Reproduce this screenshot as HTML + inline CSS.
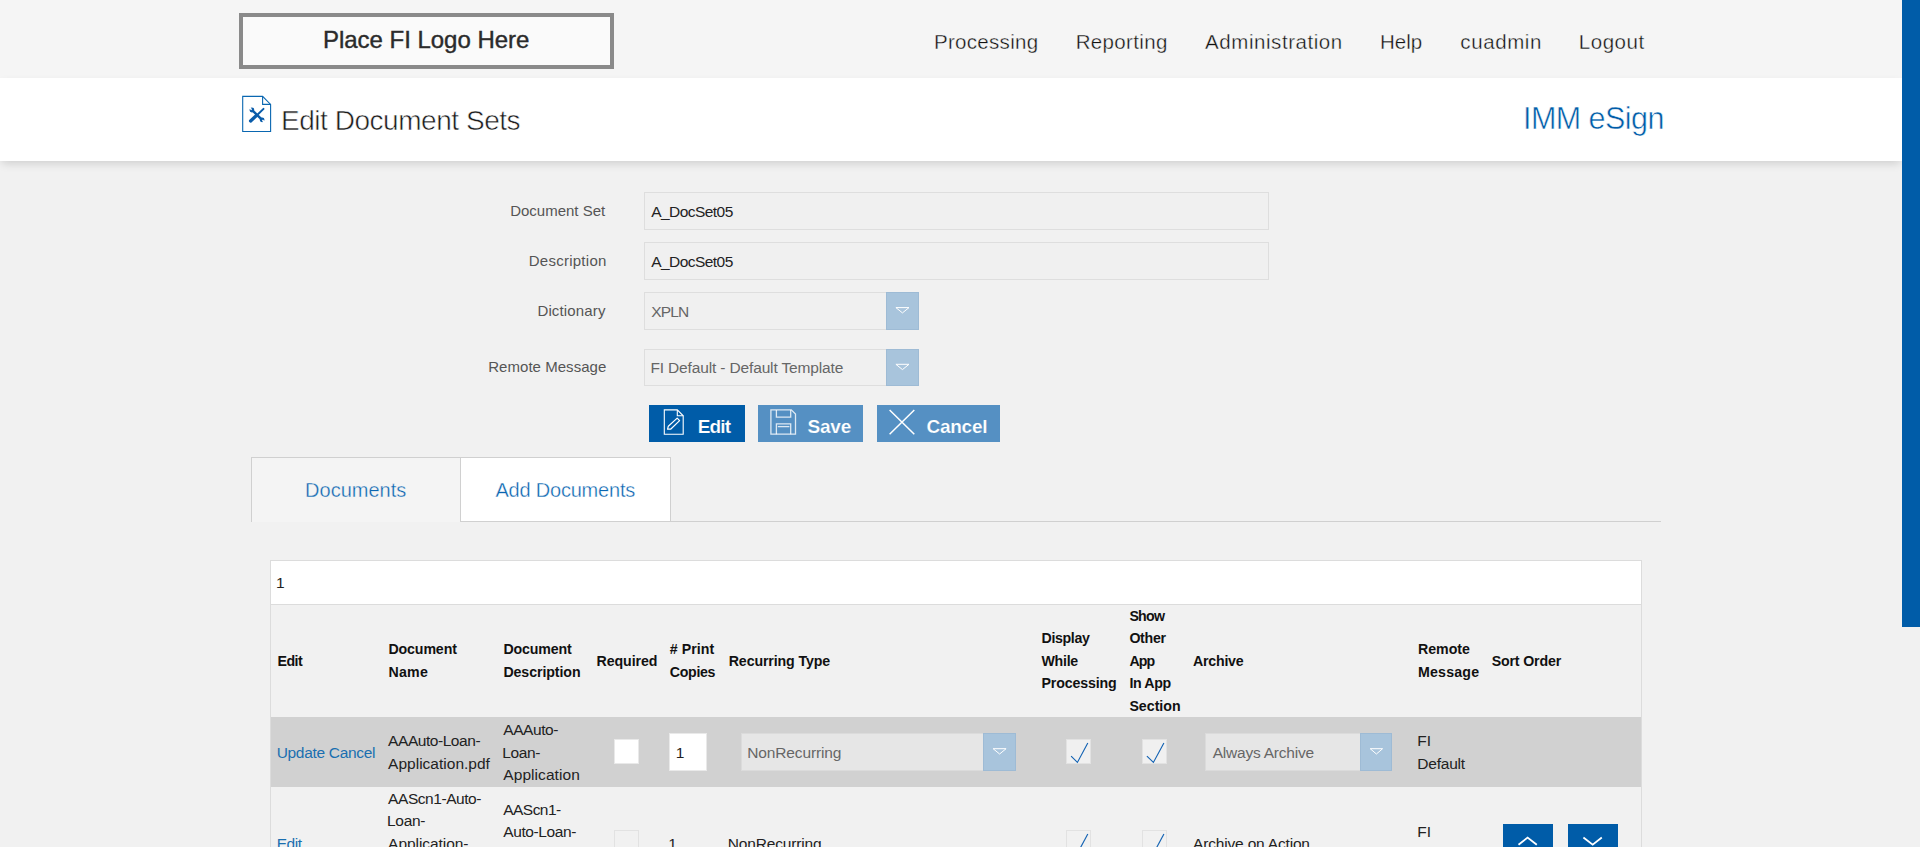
<!DOCTYPE html>
<html lang="en"><head><meta charset="utf-8"><title>Edit Document Sets</title>
<style>
html,body{margin:0;padding:0;}
body{width:1920px;height:847px;overflow:hidden;position:relative;background:#f1f1f1;font-family:"Liberation Sans",sans-serif;}
.abs,.t{position:absolute;}
.t{line-height:24px;white-space:nowrap;display:block;}
#hdr{left:0;top:0;width:1902px;height:78px;background:#f5f5f5;}
#logo{left:239px;top:13px;width:367px;height:48px;border:4px solid #8a8a8a;background:#fafafa;}
#titlebar{left:0;top:78px;width:1902px;height:83px;background:#fff;box-shadow:0 4px 9px -2px rgba(0,0,0,.16);}
#sbtrack{left:1902px;top:0;width:18px;height:847px;background:#f1f1f1;}
#sbthumb{left:1902px;top:0;width:18px;height:627px;background:#005ca8;}
.inp{border:1px solid #dedede;background:#f0f0f0;box-sizing:border-box;}
.ddb{background:#a8c4dc;box-sizing:border-box;border:1px solid #9ebbd5;}
.btn{height:37px;top:405px;}
.tab{box-sizing:border-box;}
.cb{box-sizing:border-box;width:25px;height:25px;}

</style></head>
<body>
<div class="abs" id="hdr"></div>
<div class="abs" id="logo"></div>
<div class="abs" id="titlebar"></div>
<div class="abs" id="sbtrack"></div>
<div class="abs" id="sbthumb"></div>
<!-- form -->
<div class="abs inp" style="left:644px;top:192px;width:625px;height:38px;"></div>
<div class="abs inp" style="left:644px;top:242px;width:625px;height:38px;"></div>
<div class="abs inp" style="left:644px;top:292px;width:275px;height:38px;"></div>
<div class="abs ddb" style="left:886px;top:292px;width:33px;height:38px;"></div>
<div class="abs inp" style="left:644px;top:349px;width:275px;height:37px;"></div>
<div class="abs ddb" style="left:886px;top:349px;width:33px;height:37px;"></div>
<!-- buttons -->
<div class="abs btn" style="left:649px;width:96px;background:#005ca8;"></div>
<div class="abs btn" style="left:758px;width:105px;background:#5590c3;"></div>
<div class="abs btn" style="left:877px;width:123px;background:#5590c3;"></div>
<!-- tabs -->
<div class="abs" style="left:251px;top:521px;width:1410px;height:1px;background:#d0d0d0;"></div>
<div class="abs tab" style="left:251px;top:457px;width:210px;height:65px;background:#f4f4f4;border:1px solid #d0d0d0;border-bottom:none;border-right:none;"></div>
<div class="abs tab" style="left:460px;top:457px;width:211px;height:65px;background:#fff;border:1px solid #d0d0d0;"></div>
<!-- grid -->
<div class="abs" style="left:270px;top:560px;width:1372px;height:300px;box-sizing:border-box;border:1px solid #dcdcdc;background:#f1f1f1;"></div>
<div class="abs" style="left:271px;top:561px;width:1370px;height:43px;background:#fff;border-bottom:1px solid #dcdcdc;"></div>
<div class="abs" style="left:271px;top:717px;width:1370px;height:70px;background:#d1d1d1;"></div>
<!-- row1 controls -->
<div class="abs cb" style="left:614px;top:739px;background:#fff;border:1px solid #e9e9e9;"></div>
<div class="abs" style="left:669px;top:733px;width:38px;height:38px;box-sizing:border-box;background:#fff;border:1px solid #e9e9e9;"></div>
<div class="abs" style="left:741px;top:733px;width:275px;height:38px;box-sizing:border-box;background:#e6e6e6;border:1px solid #dbdbdb;"></div>
<div class="abs ddb" style="left:983px;top:733px;width:33px;height:38px;"></div>
<div class="abs cb" style="left:1066px;top:739px;background:#f0f0f0;border:1px solid #e2e2e2;"></div>
<div class="abs cb" style="left:1142px;top:739px;background:#f0f0f0;border:1px solid #e2e2e2;"></div>
<div class="abs" style="left:1205px;top:733px;width:187px;height:38px;box-sizing:border-box;background:#e6e6e6;border:1px solid #dbdbdb;"></div>
<div class="abs ddb" style="left:1360px;top:733px;width:32px;height:38px;"></div>
<!-- row2 controls -->
<div class="abs cb" style="left:614px;top:830px;border:1px solid #e2e2e2;background:#f1f1f1;"></div>
<div class="abs cb" style="left:1066px;top:830px;border:1px solid #e2e2e2;background:#f1f1f1;"></div>
<div class="abs cb" style="left:1142px;top:830px;border:1px solid #e2e2e2;background:#f1f1f1;"></div>
<div class="abs" style="left:1503px;top:824px;width:50px;height:40px;background:#005ca8;"></div>
<div class="abs" style="left:1568px;top:824px;width:50px;height:40px;background:#005ca8;"></div>
<!-- icons -->
<svg class="abs" style="left:0;top:0;" width="1902" height="847" viewBox="0 0 1902 847" fill="none">
  <!-- title doc icon -->
  <path d="M242.7 96.4H262.6L270.6 104.4V131.5H242.7Z" stroke="#0a67b1" stroke-width="1.1" fill="#fff"/>
  <path d="M262.6 96.4V104.4H270.6" stroke="#0a67b1" stroke-width="1.1"/>
  <g stroke="#0a5caa" stroke-linecap="round">
  <path d="M252.6 110.6L261.4 119.2" stroke-width="2.4"/>
  <circle cx="251.9" cy="110" r="1.6" stroke-width="1.6" fill="#0a5caa"/>
  <circle cx="262.1" cy="119.8" r="1.6" stroke-width="1.6" fill="#0a5caa"/>
  <path d="M263.5 108.9L257.2 115" stroke-width="2"/>
  <path d="M256.2 115.8L250.6 121" stroke-width="3.3"/>
  </g>
  <path d="M251.6 109.7L249.3 107.4M262.4 120.1L264.7 122.4" stroke="#fff" stroke-width="1.5"/>
  <!-- dropdown arrows -->
  <g stroke="#fff" stroke-width="1" stroke-linejoin="round">
  <path d="M895.9 307.6H909L902.45 312.9Z"/>
  <path d="M895.9 364.3H909L902.45 369.6Z"/>
  <path d="M993.1 748.7H1006.1L999.6 754Z"/>
  <path d="M1370.2 748.7H1382.6L1376.4 754Z"/>
  </g>
  <!-- edit icon -->
  <path d="M664.3 409.9H677.3L683.2 415.8V434.3H664.3Z" stroke="#fff" stroke-width="1.1"/>
  <path d="M677.3 409.9V415.8H683.2" stroke="#fff" stroke-width="1.1"/>
  <path d="M667.6 429.2L668.3 426.2L677.2 418.1L679.6 420.6L670.6 429.2Z" stroke="#fff" stroke-width="1.2" stroke-linejoin="round"/>
  <!-- save icon -->
  <g stroke="rgba(255,255,255,.8)" stroke-width="1.3">
  <path d="M770.9 409.9H791.3L795.5 414.1V434.2H770.9Z"/>
  <path d="M776.4 409.9V417.2H790.7V409.9"/>
  <path d="M776.4 434.2V423.9H790.7V434.2"/>
  <path d="M777.8 426.6H789.4"/>
  </g>
  <!-- cancel icon -->
  <path d="M889.6 410L914.3 434.2M914.3 410L889.6 434.2" stroke="#fff" stroke-width="1.5"/>
  <!-- checks -->
  <g stroke="#1262b3" stroke-width="1.15">
  <path d="M1071.1 756.1L1077.4 762.4L1087.8 743"/>
  <path d="M1146.9 756.1L1153.4 762.4L1163.9 743"/>
  <path d="M1080.3 848L1087.8 834"/>
  <path d="M1156.4 848L1163.9 834"/>
  </g>
  <!-- chevrons -->
  <path d="M1518.5 844.8L1527.6 837.6L1536.8 844.8" stroke="#fff" stroke-width="1.8"/>
  <path d="M1583.4 837.5L1592.7 844.6L1601.8 837.5" stroke="#fff" stroke-width="1.8"/>
</svg>

<div id="text">
<span class="t" style="left:934.00px;top:30px;font-size:20.5px;font-weight:400;color:#111;letter-spacing:0.299px;-webkit-text-stroke:0.35px #f5f5f5;">Processing</span>
<span class="t" style="left:1075.70px;top:30px;font-size:20.5px;font-weight:400;color:#111;letter-spacing:0.352px;-webkit-text-stroke:0.35px #f5f5f5;">Reporting</span>
<span class="t" style="left:1205.10px;top:30px;font-size:20.5px;font-weight:400;color:#111;letter-spacing:0.555px;-webkit-text-stroke:0.35px #f5f5f5;">Administration</span>
<span class="t" style="left:1379.90px;top:30px;font-size:20.5px;font-weight:400;color:#111;letter-spacing:0.047px;-webkit-text-stroke:0.35px #f5f5f5;">Help</span>
<span class="t" style="left:1460.30px;top:30px;font-size:20.5px;font-weight:400;color:#111;letter-spacing:0.603px;-webkit-text-stroke:0.35px #f5f5f5;">cuadmin</span>
<span class="t" style="left:1578.80px;top:30px;font-size:20.5px;font-weight:400;color:#111;letter-spacing:0.519px;-webkit-text-stroke:0.35px #f5f5f5;">Logout</span>
<span class="t" style="left:323.00px;top:28px;font-size:24px;font-weight:400;color:#2b2b2b;letter-spacing:-0.025px;-webkit-text-stroke:0.4px #2b2b2b;">Place FI Logo Here</span>
<span class="t" style="left:281.00px;top:109px;font-size:28px;font-weight:400;color:#1c1c1c;letter-spacing:-0.462px;-webkit-text-stroke:0.55px #fff;">Edit Document Sets</span>
<span class="t" style="left:1523.00px;top:106px;font-size:30.5px;font-weight:400;color:#005ca8;letter-spacing:-0.551px;-webkit-text-stroke:0.55px #fff;">IMM eSign</span>
<span class="t" style="left:510.20px;top:199px;font-size:15px;font-weight:400;color:#555;letter-spacing:-0.007px;">Document Set</span>
<span class="t" style="left:528.70px;top:249px;font-size:15px;font-weight:400;color:#555;letter-spacing:0.261px;">Description</span>
<span class="t" style="left:537.40px;top:299px;font-size:15px;font-weight:400;color:#555;letter-spacing:0.157px;">Dictionary</span>
<span class="t" style="left:488.20px;top:355px;font-size:15px;font-weight:400;color:#555;letter-spacing:0.045px;">Remote Message</span>
<span class="t" style="left:651.20px;top:200px;font-size:15.5px;font-weight:400;color:#222;letter-spacing:-0.545px;">A_DocSet05</span>
<span class="t" style="left:651.20px;top:250px;font-size:15.5px;font-weight:400;color:#222;letter-spacing:-0.545px;">A_DocSet05</span>
<span class="t" style="left:651.20px;top:300px;font-size:15.5px;font-weight:400;color:#666;letter-spacing:-0.799px;">XPLN</span>
<span class="t" style="left:650.40px;top:356px;font-size:15.5px;font-weight:400;color:#666;letter-spacing:-0.145px;">FI Default - Default Template</span>
<span class="t" style="left:697.75px;top:415px;font-size:19px;font-weight:700;color:#fff;letter-spacing:-0.853px;-webkit-text-stroke:0.2px #005ca8;">Edit</span>
<span class="t" style="left:807.50px;top:415px;font-size:19px;font-weight:700;color:#fff;letter-spacing:-0.186px;-webkit-text-stroke:0.2px #5590c3;">Save</span>
<span class="t" style="left:926.50px;top:415px;font-size:19px;font-weight:700;color:#fff;letter-spacing:-0.266px;-webkit-text-stroke:0.2px #5590c3;">Cancel</span>
<span class="t" style="left:305.10px;top:478px;font-size:20px;font-weight:400;color:#0a65b0;letter-spacing:0.006px;-webkit-text-stroke:0.35px #f4f4f4;">Documents</span>
<span class="t" style="left:495.40px;top:478px;font-size:20px;font-weight:400;color:#0a65b0;letter-spacing:-0.200px;-webkit-text-stroke:0.35px #fff;">Add Documents</span>
<span class="t" style="left:276.00px;top:571px;font-size:15.5px;font-weight:400;color:#222;letter-spacing:0.000px;">1</span>
<span class="t" style="left:277.40px;top:649px;font-size:14.2px;font-weight:700;color:#111;letter-spacing:-0.457px;">Edit</span>
<span class="t" style="left:388.40px;top:637px;font-size:14.2px;font-weight:700;color:#111;letter-spacing:-0.120px;">Document</span>
<span class="t" style="left:388.40px;top:660px;font-size:14.2px;font-weight:700;color:#111;letter-spacing:0.250px;">Name</span>
<span class="t" style="left:503.40px;top:637px;font-size:14.2px;font-weight:700;color:#111;letter-spacing:-0.149px;">Document</span>
<span class="t" style="left:503.40px;top:660px;font-size:14.2px;font-weight:700;color:#111;letter-spacing:-0.088px;">Description</span>
<span class="t" style="left:596.50px;top:649px;font-size:14.2px;font-weight:700;color:#111;letter-spacing:-0.075px;">Required</span>
<span class="t" style="left:669.80px;top:637px;font-size:14.2px;font-weight:700;color:#111;letter-spacing:0.063px;"># Print</span>
<span class="t" style="left:669.80px;top:660px;font-size:14.2px;font-weight:700;color:#111;letter-spacing:-0.322px;">Copies</span>
<span class="t" style="left:728.75px;top:649px;font-size:14.2px;font-weight:700;color:#111;letter-spacing:-0.128px;">Recurring Type</span>
<span class="t" style="left:1041.50px;top:626px;font-size:14.2px;font-weight:700;color:#111;letter-spacing:-0.346px;">Display</span>
<span class="t" style="left:1041.50px;top:649px;font-size:14.2px;font-weight:700;color:#111;letter-spacing:-0.285px;">While</span>
<span class="t" style="left:1041.50px;top:671px;font-size:14.2px;font-weight:700;color:#111;letter-spacing:-0.147px;">Processing</span>
<span class="t" style="left:1129.40px;top:604px;font-size:14.2px;font-weight:700;color:#111;letter-spacing:-0.732px;">Show</span>
<span class="t" style="left:1129.40px;top:626px;font-size:14.2px;font-weight:700;color:#111;letter-spacing:-0.304px;">Other</span>
<span class="t" style="left:1129.40px;top:649px;font-size:14.2px;font-weight:700;color:#111;letter-spacing:-0.956px;">App</span>
<span class="t" style="left:1129.40px;top:671px;font-size:14.2px;font-weight:700;color:#111;letter-spacing:-0.372px;">In App</span>
<span class="t" style="left:1129.40px;top:694px;font-size:14.2px;font-weight:700;color:#111;letter-spacing:0.004px;">Section</span>
<span class="t" style="left:1193.00px;top:649px;font-size:14.2px;font-weight:700;color:#111;letter-spacing:-0.234px;">Archive</span>
<span class="t" style="left:1418.00px;top:637px;font-size:14.2px;font-weight:700;color:#111;letter-spacing:-0.028px;">Remote</span>
<span class="t" style="left:1418.00px;top:660px;font-size:14.2px;font-weight:700;color:#111;letter-spacing:0.192px;">Message</span>
<span class="t" style="left:1491.70px;top:649px;font-size:14.2px;font-weight:700;color:#111;letter-spacing:-0.159px;">Sort Order</span>
<span class="t" style="left:276.70px;top:741px;font-size:15.5px;font-weight:400;color:#1a6fb0;letter-spacing:-0.316px;">Update Cancel</span>
<span class="t" style="left:388.10px;top:729px;font-size:15.5px;font-weight:400;color:#222;letter-spacing:-0.446px;">AAAuto-Loan-</span>
<span class="t" style="left:388.10px;top:752px;font-size:15.5px;font-weight:400;color:#222;letter-spacing:0.009px;">Application.pdf</span>
<span class="t" style="left:503.30px;top:718px;font-size:15.5px;font-weight:400;color:#222;letter-spacing:-0.427px;">AAAuto-</span>
<span class="t" style="left:502.30px;top:741px;font-size:15.5px;font-weight:400;color:#222;letter-spacing:-0.395px;">Loan-</span>
<span class="t" style="left:503.30px;top:763px;font-size:15.5px;font-weight:400;color:#222;letter-spacing:0.069px;">Application</span>
<span class="t" style="left:675.80px;top:741px;font-size:15.5px;font-weight:400;color:#222;letter-spacing:0.000px;">1</span>
<span class="t" style="left:747.30px;top:741px;font-size:15.5px;font-weight:400;color:#666;letter-spacing:-0.146px;">NonRecurring</span>
<span class="t" style="left:1212.70px;top:741px;font-size:15.5px;font-weight:400;color:#666;letter-spacing:-0.213px;">Always Archive</span>
<span class="t" style="left:1417.30px;top:729px;font-size:15.5px;font-weight:400;color:#222;letter-spacing:-0.068px;">FI</span>
<span class="t" style="left:1417.30px;top:752px;font-size:15.5px;font-weight:400;color:#222;letter-spacing:-0.217px;">Default</span>
<span class="t" style="left:276.70px;top:832px;font-size:15.5px;font-weight:400;color:#1a6fb0;letter-spacing:-0.467px;">Edit</span>
<span class="t" style="left:388.10px;top:787px;font-size:15.5px;font-weight:400;color:#222;letter-spacing:-0.446px;">AAScn1-Auto-</span>
<span class="t" style="left:387.10px;top:809px;font-size:15.5px;font-weight:400;color:#222;letter-spacing:-0.345px;">Loan-</span>
<span class="t" style="left:388.10px;top:832px;font-size:15.5px;font-weight:400;color:#222;letter-spacing:-0.057px;">Application-</span>
<span class="t" style="left:503.30px;top:798px;font-size:15.5px;font-weight:400;color:#222;letter-spacing:-0.551px;">AAScn1-</span>
<span class="t" style="left:503.30px;top:820px;font-size:15.5px;font-weight:400;color:#222;letter-spacing:-0.398px;">Auto-Loan-</span>
<span class="t" style="left:668.30px;top:832px;font-size:15.5px;font-weight:400;color:#222;letter-spacing:0.000px;">1</span>
<span class="t" style="left:727.70px;top:832px;font-size:15.5px;font-weight:400;color:#222;letter-spacing:-0.155px;">NonRecurring</span>
<span class="t" style="left:1193.10px;top:832px;font-size:15.5px;font-weight:400;color:#222;letter-spacing:-0.181px;">Archive on Action</span>
<span class="t" style="left:1417.30px;top:820px;font-size:15.5px;font-weight:400;color:#222;letter-spacing:-0.068px;">FI</span>
<span class="t" style="left:1417.30px;top:843px;font-size:15.5px;font-weight:400;color:#222;letter-spacing:-0.217px;">Default</span>
</div>
</body></html>
